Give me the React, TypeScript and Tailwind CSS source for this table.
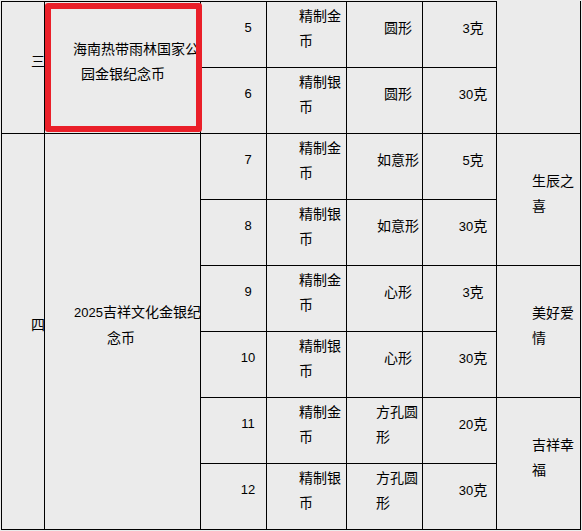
import type { ReactNode } from "react";

type Row = { no: string; kind: string[]; shape: string[]; shapeLeft?: boolean; weight: string };

const rows: Row[] = [
  { no: "5", kind: ["精制金", "币"], shape: ["圆形"], weight: "3" },
  { no: "6", kind: ["精制银", "币"], shape: ["圆形"], weight: "30" },
  { no: "7", kind: ["精制金", "币"], shape: ["如意形"], weight: "5" },
  { no: "8", kind: ["精制银", "币"], shape: ["如意形"], weight: "30" },
  { no: "9", kind: ["精制金", "币"], shape: ["心形"], weight: "3" },
  { no: "10", kind: ["精制银", "币"], shape: ["心形"], weight: "30" },
  { no: "11", kind: ["精制金", "币"], shape: ["方孔圆", "形"], shapeLeft: true, weight: "20" },
  { no: "12", kind: ["精制银", "币"], shape: ["方孔圆", "形"], shapeLeft: true, weight: "30" },
];

const themes = [
  { row: 3, lines: ["生辰之", "喜"] },
  { row: 5, lines: ["美好爱", "情"] },
  { row: 7, lines: ["吉祥幸", "福"] },
];

const digit = "font-['Liberation_Sans',sans-serif] text-[13px]";

function Cell({ col, row, span = 1, top, left, children }: { col: number; row: number; span?: number; top?: boolean; left?: boolean; children?: ReactNode }) {
  return (
    <div
      className={`flex flex-col justify-center border-b border-r border-black pb-[14px] ${top ? "border-t" : ""} ${left ? "border-l" : ""}`}
      style={{ gridColumn: col, gridRow: `${row} / span ${span}` }}
    >
      {children}
    </div>
  );
}

export default function App() {
  return (
    <div className="relative h-[531px] w-[582px] overflow-hidden bg-[#ebebeb] pt-px pl-px font-['Noto_Sans_CJK_SC',sans-serif] text-[14px] leading-[25px] text-black">
      <div className="grid grid-cols-[44px_156px_66px_80px_76px_74px_84px] grid-rows-[67px_66px_66px_66px_66px_66px_66px_66px]">
        <Cell col={1} row={1} span={2} top left>
          <div className="ml-[29px]">三</div>
        </Cell>
        <Cell col={1} row={3} span={6} left>
          <div className="ml-[29px]">四</div>
        </Cell>

        <Cell col={2} row={1} span={2} top>
          <div className="ml-[28px] whitespace-nowrap">海南热带雨林国家公</div>
          <div className="ml-[36px] whitespace-nowrap">园金银纪念币</div>
        </Cell>
        <Cell col={2} row={3} span={6}>
          <div className="ml-[29px] whitespace-nowrap">
            <span className={digit}>2025</span>吉祥文化金银纪
          </div>
          <div className="ml-[62px] whitespace-nowrap">念币</div>
        </Cell>

        {rows.map((r, i) => (
          <div key={r.no} className="contents">
            <Cell col={3} row={i + 1} top={i === 0}>
              <div className={`ml-[30px] w-[34px] text-center ${digit}`}>{r.no}</div>
            </Cell>
            <Cell col={4} row={i + 1} top={i === 0}>
              <div className="ml-[32px]">
                {r.kind.map((k) => (
                  <div key={k}>{k}</div>
                ))}
              </div>
            </Cell>
            <Cell col={5} row={i + 1} top={i === 0}>
              <div className={`ml-[29px] w-[44px] ${r.shapeLeft ? "text-left" : "text-center"}`}>
                {r.shape.map((s) => (
                  <div key={s}>{s}</div>
                ))}
              </div>
            </Cell>
            <Cell col={6} row={i + 1} top={i === 0}>
              <div className="ml-[30px] w-[40px] text-center whitespace-nowrap">
                <span className={digit}>{r.weight}</span>克
              </div>
            </Cell>
          </div>
        ))}

        <Cell col={7} row={1} span={2} />
        {themes.map((t) => (
          <Cell key={t.row} col={7} row={t.row} span={2}>
            <div className="ml-[35px]">
              {t.lines.map((l) => (
                <div key={l}>{l}</div>
              ))}
            </div>
          </Cell>
        ))}
      </div>

      {/* highlight box drawn over the first group */}
      <div className="pointer-events-none absolute left-[45px] top-[3px] h-[129px] w-[157px] rounded-[3px] border-[6px] border-[#ea1f29]" />
    </div>
  );
}
